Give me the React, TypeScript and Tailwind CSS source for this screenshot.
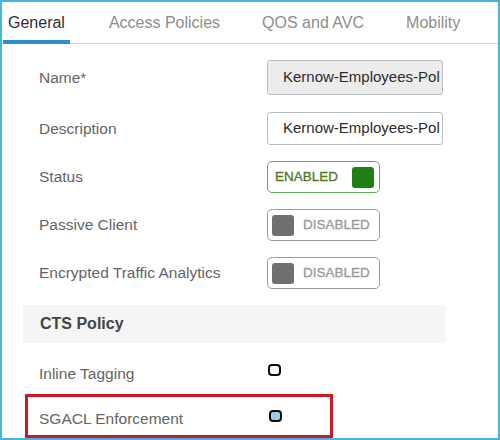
const FONT = { fontFamily: '"Liberation Sans", Arial, sans-serif' };

const TABS = [
  { label: 'General', active: true, cls: 'ml-[1px] px-[5px]' },
  { label: 'Access Policies', active: false, cls: 'ml-[39px]' },
  { label: 'QOS and AVC', active: false, cls: 'ml-[42px]' },
  { label: 'Mobility', active: false, cls: 'ml-[42px]' },
];

function Toggle({ on }: { on: boolean }) {
  if (on) {
    return (
      <div className="w-[113px] h-[32px] rounded-[5px] border-[1.5px] border-[#5ea95a] flex items-center justify-between pl-[7px] pr-[5px]">
        <span className="text-[13.5px] text-[#4a7a1e] [-webkit-text-stroke:0.3px_#4a7a1e]">ENABLED</span>
        <span className="w-[22px] h-[21px] rounded-[3px] bg-[#1f7e14]" />
      </div>
    );
  }
  return (
    <div className="w-[113px] h-[32px] rounded-[5px] border-[1.5px] border-[#9a9a9a] flex items-center pl-[4px] gap-[9px]">
      <span className="w-[22px] h-[21px] rounded-[3px] bg-[#707070]" />
      <span className="text-[13.5px] text-[#999] [-webkit-text-stroke:0.3px_#999]">DISABLED</span>
    </div>
  );
}

function Checkbox({ checked }: { checked?: boolean }) {
  return (
    <span
      className={
        'block w-[13px] h-[12px] rounded-[4px] border-[2.5px] border-[#0d0d0d] ' +
        (checked ? 'bg-[#9fcde6]' : 'bg-white')
      }
    />
  );
}

function Row({ label, mt, h, children }: { label: string; mt: string; h: string; children: React.ReactNode }) {
  return (
    <div className={`flex items-center pl-[37px] ${mt} ${h}`}>
      <span className="w-[228px] text-[15.5px] text-[#646464]">{label}</span>
      {children}
    </div>
  );
}

export default function App() {
  return (
    <div style={FONT} className="w-[500px] h-[440px] border-2 border-[#43b5e3] bg-white overflow-hidden flex flex-col">
      {/* tabs */}
      <div className="flex h-[42px] border-b border-[#d3d6da] shrink-0">
        {TABS.map((t) => (
          <div
            key={t.label}
            className={
              `${t.cls} pt-[11px] text-[16px] leading-[20px] ` +
              (t.active ? 'text-[#2f2f2f] border-b-[4px] border-[#2a8fcc] -mb-px' : 'text-[#8d8d8d]')
            }
          >
            {t.label}
          </div>
        ))}
      </div>

      <Row label="Name*" mt="mt-[16px]" h="h-[35px]">
        <div className="w-[176px] h-[35px] rounded-[3px] border border-[#b9bcc0] bg-[#ececec] flex items-center pl-[15px] text-[15px] text-[#2b2b2b] whitespace-nowrap overflow-hidden">
          Kernow-Employees-Pol
        </div>
      </Row>
      <Row label="Description" mt="mt-[17px]" h="h-[33px]">
        <div className="w-[176px] h-[33px] rounded-[3px] border border-[#b9bcc0] bg-white flex items-center pl-[15px] text-[15px] text-[#2b2b2b] whitespace-nowrap overflow-hidden">
          Kernow-Employees-Pol
        </div>
      </Row>
      <Row label="Status" mt="mt-[16px]" h="h-[32px]">
        <Toggle on />
      </Row>
      <Row label="Passive Client" mt="mt-[16px]" h="h-[32px]">
        <Toggle on={false} />
      </Row>
      <Row label="Encrypted Traffic Analytics" mt="mt-[16px]" h="h-[32px]">
        <Toggle on={false} />
      </Row>

      {/* CTS Policy */}
      <div className="ml-[21px] mt-[16px] w-[422px] h-[38px] bg-[#f5f5f5] flex items-center pl-[17px] shrink-0">
        <span className="text-[16px] font-bold text-[#444]">CTS Policy</span>
      </div>

      <Row label="Inline Tagging" mt="mt-[17px]" h="h-[28px]">
        <span className="-mt-[9px] ml-[1px]">
          <Checkbox />
        </span>
      </Row>

      <div className="ml-[23px] mt-[6px] w-[308px] h-[44px] border-[3px] border-[#cc1a24] flex items-center pl-[11px] pt-[6px] shrink-0">
        <span className="w-[229px] text-[15.5px] text-[#646464]">SGACL Enforcement</span>
        <span className="-mt-[6px] ml-[1px]">
          <Checkbox checked />
        </span>
      </div>
    </div>
  );
}
